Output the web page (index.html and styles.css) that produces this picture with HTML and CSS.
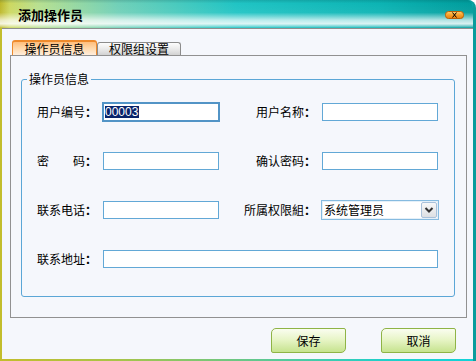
FILE: index.html
```html
<!DOCTYPE html>
<html lang="zh-CN">
<head>
<meta charset="utf-8">
<title>添加操作员</title>
<link rel="stylesheet" href="styles.css">
</head>
<body>
<div class="window">
  <div class="titlebar">
    <span class="title">添加操作员</span>
    <svg class="close" width="19" height="8" viewBox="0 0 19 8">
      <defs>
        <linearGradient id="cg" x1="0" y1="0" x2="0" y2="1">
          <stop offset="0" stop-color="#ffd070"/>
          <stop offset="0.5" stop-color="#f8a028"/>
          <stop offset="1" stop-color="#e88010"/>
        </linearGradient>
      </defs>
      <rect x="0.5" y="0.5" width="18" height="7" rx="3" fill="url(#cg)" stroke="#b86008"/>
      <path d="M7.5 1.5 L11.5 6.5 M11.5 1.5 L7.5 6.5" stroke="#000" stroke-width="1"/>
    </svg>
  </div>
  <div class="client">
    <div class="tabs">
      <div class="tab active">操作员信息</div>
      <div class="tab">权限组设置</div>
    </div>
    <div class="panel">
      <div class="group">
        <span class="legend">操作员信息</span>
        <div class="form">
          <span class="label">用户编号<span class="c">：</span></span>
          <div class="input focus"><span class="sel">00003</span></div>
          <span class="label r">用户名称<span class="c">：</span></span>
          <div class="input"></div>

          <span class="label">密　　码<span class="c">：</span></span>
          <div class="input"></div>
          <span class="label r">确认密码<span class="c">：</span></span>
          <div class="input"></div>

          <span class="label">联系电话<span class="c">：</span></span>
          <div class="input"></div>
          <span class="label r">所属权限組<span class="c">：</span></span>
          <div class="select">
            <span class="opt">系统管理员</span>
            <span class="drop">
              <svg width="16" height="16" viewBox="0 0 16 16"><path d="M4.5 6 L8 9.5 L11.5 6" fill="none" stroke="#333" stroke-width="2"/></svg>
            </span>
          </div>

          <span class="label">联系地址<span class="c">：</span></span>
          <div class="input wide"></div>
        </div>
      </div>
    </div>
    <div class="buttons">
      <button class="btn">保存</button>
      <button class="btn">取消</button>
    </div>
  </div>
</div>
</body>
</html>
```
FILE: styles.css
```css
html, body {
  margin: 0;
  padding: 0;
  background: #ffffff;
}
body {
  font-family: "Noto Sans CJK SC", "Liberation Sans", sans-serif;
  font-size: 12px;
  color: #000;
}
.window {
  width: 476px;
  height: 361px;
  box-sizing: border-box;
  display: flex;
  flex-direction: column;
  background: linear-gradient(90deg, #c3bd2c 0%, #a8c448 25%, #60c890 55%, #22cfc8 80%, #12d2d8 100%);
  border-right: 3px solid #0a9c9c;
  border-top-right-radius: 8px;
  overflow: hidden;
}
.titlebar {
  height: 28px;
  flex: none;
  display: flex;
  align-items: center;
  padding-left: 18px;
  background:
    linear-gradient(180deg, rgba(0,60,60,0.18) 0, rgba(255,255,255,0) 12%, rgba(255,255,255,0.05) 45%, rgba(255,255,255,0.7) 72%, rgba(255,255,255,0.85) 85%, rgba(255,255,255,0.3) 96%, rgba(0,0,0,0) 100%),
    linear-gradient(90deg, #bdb72a 0, #cdd860 2%, #b8e090 8%, #70d0b8 25%, #20c4c4 50%, #0cb4b4 80%, #009c9c 100%);
}
.title {
  font-weight: bold;
  font-size: 13px;
  line-height: 14px;
  padding-top: 2px;
}
.close {
  margin-left: auto;
  margin-right: 9px;
  align-self: flex-start;
  margin-top: 11px;
  display: block;
}
.client {
  flex: 1;
  margin: 0 0 2px 2px;
  background: #f5f7fc;
  border-top: 1px solid #8e8e8e;
  padding: 11px 6px 0 8px;
  display: flex;
  flex-direction: column;
}
.tabs {
  display: flex;
  align-items: flex-end;
  height: 15px;
  padding-left: 2px;
}
.tab {
  box-sizing: border-box;
  height: 13px;
  width: 84px;
  border: 1px solid #8c8c8c;
  border-bottom: none;
  border-radius: 3px 3px 0 0;
  display: flex;
  align-items: center;
  justify-content: center;
  line-height: 12px;
  background: linear-gradient(#fdfdfd, #e6e6e6 60%, #d2d2d2);
}
.tab.active {
  height: 15px;
  width: 85px;
  border-color: #ee8a2c;
  border-top-width: 2px;
  background: linear-gradient(#ffbe7c, #ffd9ac 50%, #ffeedd);
}
.panel {
  border: 1px solid #919191;
  padding: 23px 11px 20px 10px;
}
.group {
  position: relative;
  border: 1px solid #5ba6d6;
  border-radius: 3px;
  padding: 23px 0 28px 15px;
}
.legend {
  position: absolute;
  left: 5px;
  top: -8px;
  padding: 0 2px;
  line-height: 14px;
  background: #f5f7fc;
}
.form {
  display: grid;
  grid-template-columns: 60px 116px 91px 116px;
  grid-template-rows: repeat(4, 18px);
  column-gap: 6px;
  row-gap: 31px;
  align-items: center;
}
.label {
  white-space: nowrap;
  line-height: 14px;
}
.label.r {
  justify-self: end;
}
.c {
  font-family: "Noto Sans CJK TC", "Noto Sans CJK SC", sans-serif;
  font-weight: bold;
}
.input {
  box-sizing: border-box;
  height: 18px;
  border: 1px solid #62a8d6;
  background: #fff;
}
.input.wide {
  grid-column: 2 / 5;
}
.input.focus {
  height: 20px;
  width: 118px;
  margin-left: -1px;
  border: 2px solid #5294c6;
  display: flex;
  align-items: center;
  padding-left: 1px;
}
.sel {
  font-family: "Liberation Sans", sans-serif;
  font-size: 12px;
  line-height: 12px;
  height: 12px;
  background: #0a246a;
  color: #fff;
  padding-right: 1px;
}
.select {
  box-sizing: border-box;
  height: 20px;
  width: 118px;
  margin-left: -1px;
  border: 1px solid #86bbe0;
  box-shadow: inset 0 0 0 1px #e4f0f9;
  background: #fff;
  display: flex;
  align-items: center;
  padding: 0 1px 0 2px;
}
.opt {
  flex: 1;
  line-height: 14px;
}
.drop {
  box-sizing: border-box;
  width: 16px;
  height: 16px;
  border: 1px solid #a9c1da;
  border-radius: 2px;
  background: linear-gradient(#f8f8f8, #dcdfe3);
  display: flex;
  align-items: center;
  justify-content: center;
}
.drop svg {
  display: block;
  margin: -1px;
}
.buttons {
  display: flex;
  justify-content: flex-end;
  gap: 35px;
  margin-top: 10px;
  margin-right: 11px;
}
.btn {
  box-sizing: border-box;
  width: 75px;
  height: 25px;
  padding: 0;
  border: 1px solid #8fb446;
  border-radius: 5px 2px 5px 2px;
  background: linear-gradient(#fafdf0, #e8f5c8 45%, #c6e38e 100%);
  font-family: "Noto Sans CJK SC", sans-serif;
  font-size: 12px;
  line-height: 14px;
  color: #000;
}
```
